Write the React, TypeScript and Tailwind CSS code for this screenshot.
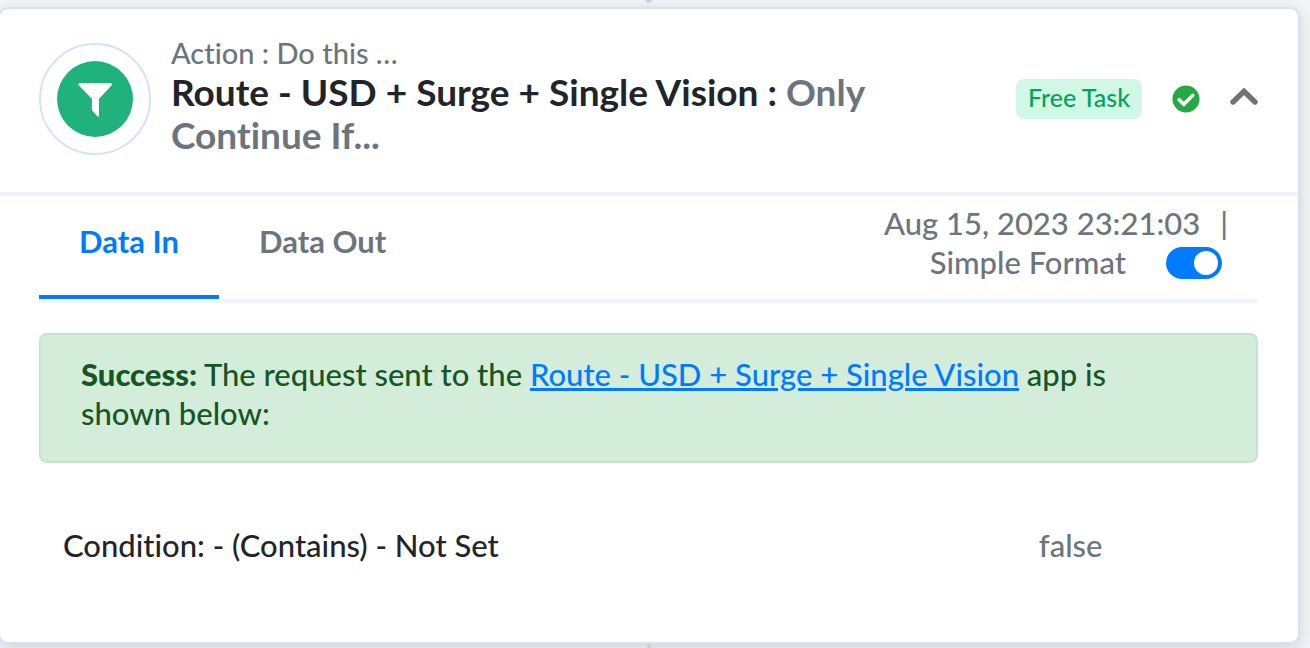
import { useState } from "react";
import { FaCheckCircle } from "react-icons/fa";

function FunnelLogo() {
  return (
    <svg viewBox="0 0 76 76" className="size-19" aria-hidden="true">
      <circle cx="38" cy="38" r="38" fill="#20b27c" />
      <path
        d="M22.5 22.3h31.4c1.1 0 1.4 1.4.6 2.200L42 37.800v17c0 1-1 1.200-1.600.5L35.600 50c-.5-.6-.7-1-.7-1.700V37.800L21.900 24.500c-.8-.8-.5-2.200.6-2.200z"
        fill="#fff"
      />
    </svg>
  );
}

function ChevronUp() {
  return (
    <svg viewBox="0 0 28 22" className="h-[22px] w-7" aria-hidden="true">
      <path d="M3 14L14 3.300 25 14" fill="none" stroke="#6c757d" strokeWidth="5.400" strokeLinecap="round" />
    </svg>
  );
}

const tabs = ["Data In", "Data Out"];

export default function App() {
  const [active, setActive] = useState("Data In");
  const [simple, setSimple] = useState(true);

  return (
    <div className="min-h-screen overflow-hidden bg-[#f1f5f8] font-['Lato','Open_Sans',sans-serif] text-[31px] leading-[39px] font-medium text-[#212529] [font-variant-ligatures:no-common-ligatures]">
      <div className="flex h-[7px] justify-center pr-3">
        <svg viewBox="0 0 10 7" className="h-[7px] w-2.5" aria-hidden="true">
          <path d="M1 0h8L6.500 2.600Q5 4 3.500 2.600z" fill="#cdd0d6" />
        </svg>
      </div>

      <main className="-ml-0.5 mr-[10px] rounded-[10px] border-2 border-[#d4e1fc] bg-white shadow-[0_4px_16px_rgba(0,0,0,0.14)]">
        <header className="flex items-center border-b-4 border-[#edf6fe] pt-[27px] pr-10 pb-[30px] pl-[39px]">
          <div className="flex size-28 shrink-0 items-center justify-center rounded-full border-2 border-[#d4e1fc]">
            <FunnelLogo />
          </div>
          <div className="ml-5 min-w-0 flex-1 pb-1.5">
            <p className="text-[29px] leading-[34px] text-[#6c757d]">Action : Do this …</p>
            <h1 className="max-w-[760px] text-[37px] leading-[43px] font-bold">
              Route - USD + Surge + Single Vision :{" "}
              <span className="text-[#6c757d]">Only Continue If...</span>
            </h1>
          </div>
          <div className="flex shrink-0 items-center">
            <span className="rounded-lg bg-[#cff8e5] px-3 pb-1 text-[25px] leading-9 text-[#06a25c]">
              Free Task
            </span>
            <FaCheckCircle className="ml-[30px] size-7 text-[#28a745]" aria-label="Succeeded" />
            <button type="button" aria-label="Collapse step" className="ml-[30px]">
              <ChevronUp />
            </button>
          </div>
        </header>

        <section className="pr-10 pb-[77px] pl-[39px]">
          <div className="flex items-stretch justify-between border-b-4 border-[#edf6fe]">
            <div role="tablist" className="flex">
              {tabs.map((tab) => (
                <button
                  key={tab}
                  type="button"
                  role="tab"
                  aria-selected={tab === active}
                  onClick={() => setActive(tab)}
                  className={
                    tab === active
                      ? "border-b-4 border-[#007bff] px-10 pb-2 font-bold text-[#007bff]"
                      : "border-b-4 border-transparent px-10 pb-2 font-bold text-[#6c757d]"
                  }
                >
                  {tab}
                </button>
              ))}
            </div>
            <div className="flex flex-col items-end pt-2 pr-[30px] pb-[17px] text-[#6c757d]">
              <p>
                <time dateTime="2023-08-15T23:21:03">Aug 15, 2023 23:21:03</time>
                <span className="ml-5">|</span>
              </p>
              <label className="flex items-center gap-10 pr-1.5">
                Simple Format
                <input
                  type="checkbox"
                  role="switch"
                  checked={simple}
                  onChange={() => setSimple(!simple)}
                  className="flex h-8 w-14 appearance-none items-center rounded-full bg-[#adb5bd] px-1 before:size-6 before:rounded-full before:bg-white checked:justify-end checked:bg-[#007bff]"
                />
              </label>
            </div>
          </div>

          <div className="mt-[30px] rounded-lg border-2 border-[#c3e6cb] bg-[#d4edda] pt-5 pr-20 pb-7 pl-10 text-[#155724]">
            <p>
              <strong className="font-black">Success:</strong> The request sent to the{" "}
              <a href="#route" className="text-[#007bff] underline">
                Route - USD + Surge + Single Vision
              </a>{" "}
              app is shown below:
            </p>
          </div>

          <dl className="mt-[63px] flex items-center px-6">
            <dt className="w-5/6">Condition: - (Contains) - Not Set</dt>
            <dd className="text-[#6c757d]">false</dd>
          </dl>
        </section>
      </main>
      <div className="flex h-1 justify-center pr-3">
        <div className="w-1 bg-[#cdd0d6]" />
      </div>
    </div>
  );
}
